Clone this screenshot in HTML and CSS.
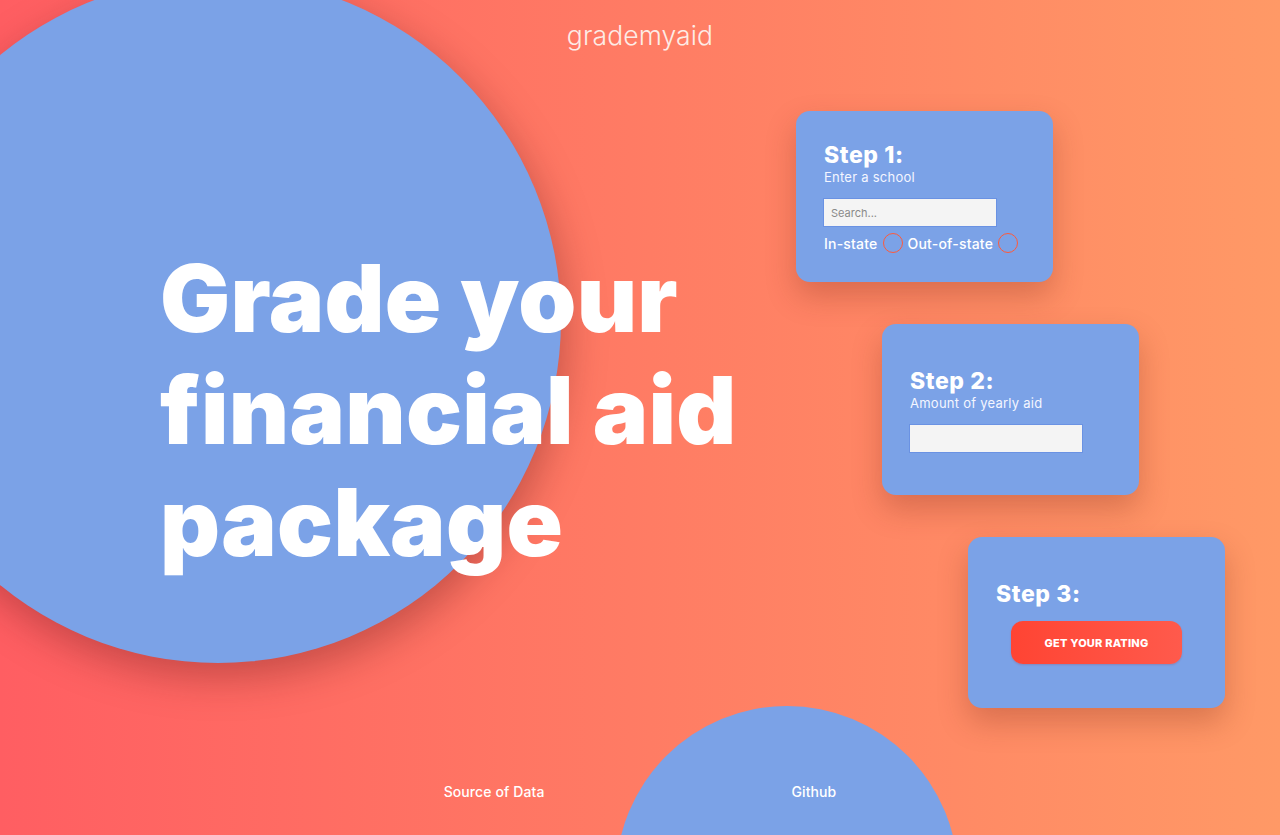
FILE: index.html
```html
<!DOCTYPE html>
<html lang="en">
<head>
<meta charset="utf-8">
<title>grademyaid</title>
<link rel="stylesheet" href="styles.css">
</head>
<body>
<div class="page">
  <div class="blob blob-big"></div>
  <div class="blob blob-small"></div>

  <header class="brand">grademyaid</header>

  <main class="hero">
    <div class="hero-text">
      <h1 class="headline">Grade your<br>financial aid<br>package</h1>
    </div>

    <div class="steps">
      <section class="card card-1">
        <h2 class="step-title">Step 1:</h2>
        <p class="step-sub">Enter a school</p>
        <input class="field" type="text" placeholder="Search...">
        <div class="radios">
          <span class="radio-label">In-state</span><span class="radio"></span>
          <span class="radio-label">Out-of-state</span><span class="radio"></span>
        </div>
      </section>

      <section class="card card-2">
        <h2 class="step-title">Step 2:</h2>
        <p class="step-sub">Amount of yearly aid</p>
        <input class="field" type="text">
      </section>

      <section class="card card-3">
        <h2 class="step-title">Step 3:</h2>
        <button class="rate-btn" type="button">GET YOUR RATING</button>
      </section>
    </div>
  </main>

  <footer class="footer">
    <a class="footer-link" href="#">Source of Data</a>
    <a class="footer-link" href="#">Github</a>
  </footer>
</div>
</body>
</html>
```

FILE: styles.css
```css
* { box-sizing: border-box; }

html, body {
  margin: 0;
  padding: 0;
}

body {
  font-family: "Inter", "Open Sans", "Liberation Sans", sans-serif;
  color: #fff;
}

.page {
  position: relative;
  height: 835px;
  overflow: hidden;
  background: linear-gradient(90deg, #ff5e62 0%, #ff9966 100%);
}

.blob {
  position: absolute;
  border-radius: 50%;
  background: #7ba2e7;
}

.blob-big {
  left: -125px;
  top: -23px;
  width: 686px;
  height: 686px;
  box-shadow: 4px 14px 40px rgba(90, 20, 20, 0.35);
}

.blob-small {
  left: 616px;
  top: 706px;
  width: 342px;
  height: 342px;
}

.brand {
  position: relative;
  text-align: center;
  font-size: 26.5px;
  font-weight: 300;
  line-height: 36px;
  padding-top: 17px;
  height: 70px;
  color: #fdece6;
  letter-spacing: 0.1px;
}

.hero {
  position: relative;
  display: flex;
  align-items: center;
  margin-top: 41px;
}

.hero-text {
  flex: 1;
  padding-left: 160px;
}

.headline {
  margin: 0;
  font-size: 93px;
  line-height: 112px;
  font-weight: 900;
  letter-spacing: 0.3px;
  color: #fff;
}

.steps {
  display: flex;
  flex-direction: column;
  gap: 42px;
  width: 429px;
  margin-right: 55px;
}

.card {
  width: 257px;
  height: 171px;
  border-radius: 14px;
  background: #7ba2e7;
  box-shadow: 0 14px 30px rgba(120, 40, 20, 0.28);
  padding: 0 28px;
  display: flex;
  flex-direction: column;
  justify-content: center;
}

.card-1 { margin-left: 0; padding-top: 2px; }
.card-2 { margin-left: 86px; }
.card-3 { margin-left: 172px; }

.step-title {
  margin: 0;
  font-size: 23px;
  line-height: 26px;
  font-weight: 800;
  letter-spacing: 0.6px;
}

.step-sub {
  margin: 1px 0 0;
  font-size: 13px;
  line-height: 16px;
  font-weight: 400;
  letter-spacing: 0.25px;
  color: #f4f6ff;
}

.field {
  display: block;
  width: 172px;
  height: 27px;
  margin-top: 14px;
  border: 0;
  box-shadow: 0 0 0 1px rgba(100, 140, 225, 0.7);
  background: #f4f4f4;
  padding: 0 7px;
  font-family: inherit;
  font-size: 11px;
  color: #333;
  outline: none;
}

.field::placeholder {
  color: #8a8a8a;
}

.radios {
  display: flex;
  align-items: center;
  margin-top: 7px;
  height: 20px;
}

.radio-label {
  font-size: 14px;
  font-weight: 500;
  letter-spacing: 0.2px;
  color: #fff;
}

.radio {
  width: 20px;
  height: 20px;
  border-radius: 50%;
  border: 1.5px solid #ff5a3a;
  margin: 0 5px 0 5px;
}

.rate-btn {
  align-self: center;
  margin-top: 14px;
  width: 171px;
  height: 43px;
  border: 0;
  border-radius: 12px;
  background: linear-gradient(90deg, #ff4433 0%, #ff5a4c 100%);
  color: #fff;
  font-family: inherit;
  font-size: 11px;
  font-weight: 800;
  letter-spacing: 0.2px;
  cursor: pointer;
  box-shadow: 0 1px 2px rgba(160, 30, 20, 0.2);
}

.footer {
  position: relative;
  display: flex;
  justify-content: center;
  gap: 247px;
  margin-top: 76px;
}

.footer-link {
  color: #fff;
  text-decoration: none;
  font-size: 14px;
  line-height: 16px;
  font-weight: 500;
  letter-spacing: 0.1px;
}
```
